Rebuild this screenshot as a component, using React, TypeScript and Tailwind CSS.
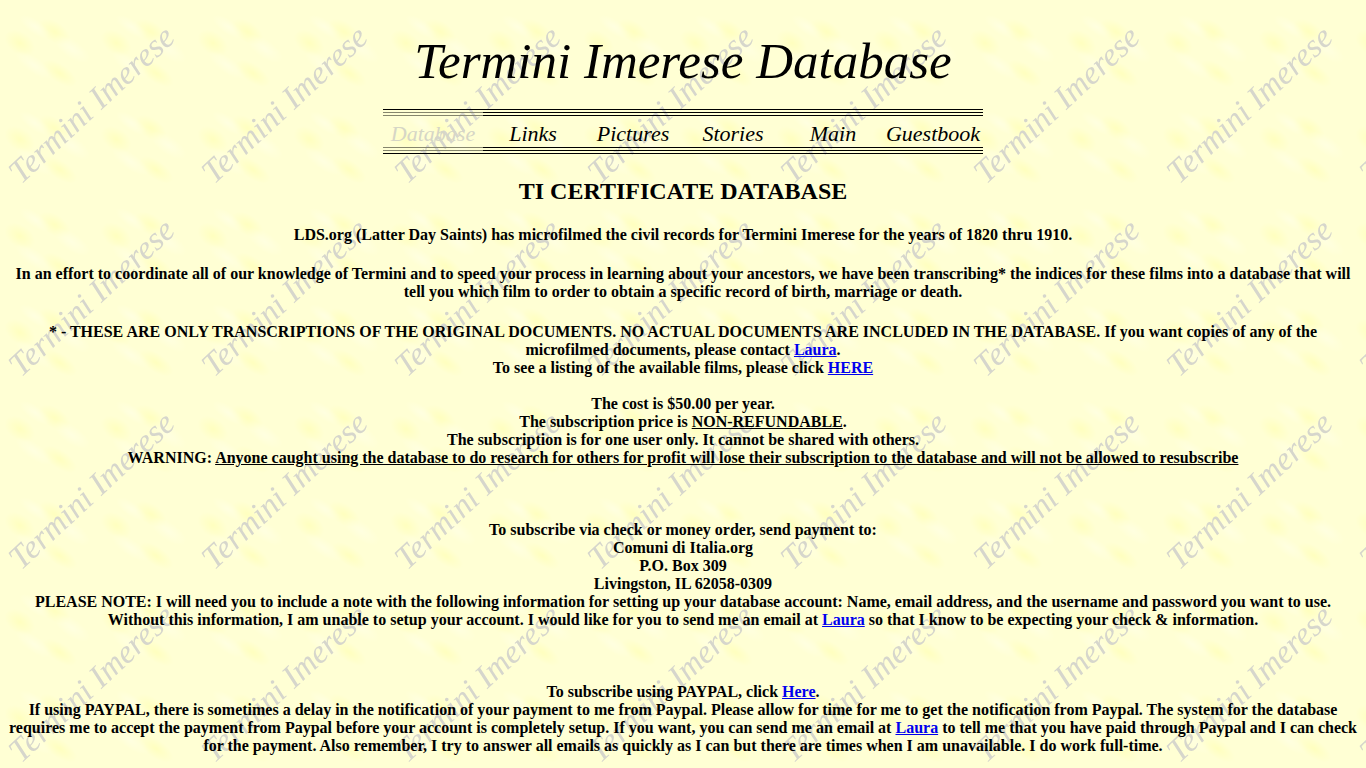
import React from "react";

const sections = ["Links", "Pictures", "Stories", "Main", "Guestbook"];

function Watermark() {
  return (
    <svg aria-hidden="true" className="col-start-1 row-start-1 h-full w-full">
      <defs>
        <radialGradient id="warm">
          <stop offset="0" stopColor="#ffffb8" stopOpacity="0.75" />
          <stop offset="1" stopColor="#ffffb8" stopOpacity="0" />
        </radialGradient>
        <radialGradient id="pale">
          <stop offset="0" stopColor="#ffffe4" stopOpacity="0.75" />
          <stop offset="1" stopColor="#ffffe4" stopOpacity="0" />
        </radialGradient>
        <pattern id="marble" width="96.5" height="96.5" patternUnits="userSpaceOnUse">
          <rect width="97" height="97" fill="#ffffd4" />
          <g transform="rotate(35 48 48)">
            <ellipse cx="44" cy="31" rx="18" ry="10" fill="url(#warm)" />
            <ellipse cx="22" cy="60" rx="17" ry="11" fill="url(#warm)" />
            <ellipse cx="72" cy="62" rx="20" ry="9" fill="url(#warm)" />
            <ellipse cx="68" cy="35" rx="21" ry="9" fill="url(#pale)" />
            <ellipse cx="46" cy="70" rx="22" ry="8" fill="url(#pale)" />
            <ellipse cx="25" cy="38" rx="18" ry="7" fill="url(#pale)" />
          </g>
        </pattern>
        <pattern id="name" width="193" height="193" patternUnits="userSpaceOnUse">
          <text
            transform="translate(21 185) rotate(-43)"
            fontSize="33"
            fill="#d6d6cc"
            className="font-['Liberation_Serif',serif] italic"
          >
            Termini Imerese
          </text>
        </pattern>
      </defs>
      <rect width="100%" height="100%" fill="url(#marble)" />
      <rect width="100%" height="100%" fill="url(#name)" />
    </svg>
  );
}

function Rule({ faded = false }: { faded?: boolean }) {
  return (
    <div className="grid h-px grid-cols-6">
      <div className={faded ? "bg-[#85856c]" : "bg-black"} />
      <div className="col-span-5 bg-black" />
    </div>
  );
}

function TextLink({ children }: { children: React.ReactNode }) {
  return (
    <a href="#" className="text-[#0000ee] underline">
      {children}
    </a>
  );
}

export default function App() {
  return (
    <div className="grid min-h-screen grid-cols-1 bg-[#ffffd4] font-['Liberation_Serif',serif] text-black">
      <Watermark />
      <div className="z-10 col-start-1 row-start-1 px-2 text-center">
        <header className="flex flex-col items-center pt-7">
          <h1 className="h-[81px] text-[51px] leading-[66px] italic">Termini Imerese Database</h1>
          <nav aria-label="Main sections" className="w-full max-w-[600px]">
            <div className="flex flex-col gap-[2px]">
              <Rule />
              <Rule faded />
              <Rule faded />
            </div>
            <div className="grid h-[31px] grid-cols-6 items-center text-[22px] leading-[35px] italic">
              <a href="#" aria-current="page" className="text-[#d6d6c6]">
                Database
              </a>
              {sections.map((name) => (
                <a key={name} href="#">
                  {name}
                </a>
              ))}
            </div>
            <div className="flex flex-col gap-[2px]">
              <Rule faded />
              <Rule faded />
              <Rule />
            </div>
          </nav>
        </header>
        <main className="text-base leading-[18px] font-bold">
          <h2 className="mt-6 mb-[21px] text-2xl leading-[27px]">TI CERTIFICATE DATABASE</h2>
          <p className="mb-[21px]">
            LDS.org (Latter Day Saints) has microfilmed the civil records for Termini Imerese for the years of 1820 thru
            1910.
          </p>
          <p className="mb-[22px]">
            In an effort to coordinate all of our knowledge of Termini and to speed your process in learning about your
            ancestors, we have been transcribing* the indices for these films into a database that will tell you which
            film to order to obtain a specific record of birth, marriage or death.
          </p>
          <p>
            * - THESE ARE ONLY TRANSCRIPTIONS OF THE ORIGINAL DOCUMENTS. NO ACTUAL DOCUMENTS ARE INCLUDED IN THE
            DATABASE. If you want copies of any of the microfilmed documents, please contact <TextLink>Laura</TextLink>.
            <br />
            To see a listing of the available films, please click <TextLink>HERE</TextLink>
          </p>
          <p className="mt-[18px]">
            The cost is $50.00 per year.
            <br />
            The subscription price is <u>NON-REFUNDABLE</u>.
            <br />
            The subscription is for one user only. It cannot be shared with others.
            <br />
            WARNING:{" "}
            <u>
              Anyone caught using the database to do research for others for profit will lose their subscription to the
              database and will not be allowed to resubscribe
            </u>
          </p>
          <p className="mt-[54px]">
            To subscribe via check or money order, send payment to:
            <br />
            Comuni di Italia.org
            <br />
            P.O. Box 309
            <br />
            Livingston, IL 62058-0309
            <br />
            PLEASE NOTE: I will need you to include a note with the following information for setting up your database
            account: Name, email address, and the username and password you want to use. Without this information, I am
            unable to setup your account. I would like for you to send me an email at <TextLink>Laura</TextLink> so that
            I know to be expecting your check &amp; information.
          </p>
          <p className="mt-[54px]">
            To subscribe using PAYPAL, click <TextLink>Here</TextLink>.
            <br />
            If using PAYPAL, there is sometimes a delay in the notification of your payment to me from Paypal. Please
            allow for time for me to get the notification from Paypal. The system for the database requires me to accept
            the payment from Paypal before your account is completely setup. If you want, you can send me an email at{" "}
            <TextLink>Laura</TextLink> to tell me that you have paid through Paypal and I can check for the payment.
            Also remember, I try to answer all emails as quickly as I can but there are times when I am unavailable. I do
            work full-time.
          </p>
        </main>
      </div>
    </div>
  );
}
